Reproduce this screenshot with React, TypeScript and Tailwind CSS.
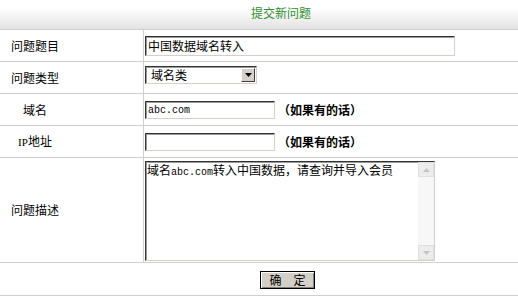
import React from "react";

const cjk = { fontFamily: '"Noto Sans CJK SC", "Noto Sans", sans-serif' };

function Mono({ children }: { children: React.ReactNode }) {
  return (
    <span className="text-[10px] [font-family:'Liberation_Mono',monospace]">{children}</span>
  );
}

function Label({ children }: { children: React.ReactNode }) {
  return (
    <div className="w-[144px] shrink-0 border-r border-[#cfcfcf] flex items-center">
      <div className="w-[70px] text-center text-[12px] leading-[14px] text-black">{children}</div>
    </div>
  );
}

const insetBox =
  "border border-t-[#333] border-l-[#333] border-b-[#d4d0c8] border-r-[#d4d0c8] bg-white shadow-[inset_1px_1px_0_#9a9a9a]";

export default function App() {
  return (
    <div className="w-[518px] h-[300px] bg-white overflow-hidden" style={cjk}>
      {/* header */}
      <div className="h-[30px] border-b border-[#cfcfcf] bg-gradient-to-b from-white from-30% to-[#e2e2e2] flex items-center pl-[251px]">
        <span className="text-[12px] leading-[14px] text-[#2f8f2f] -mt-[4px]">提交新问题</span>
      </div>

      {/* row 1 */}
      <div className="h-[32px] border-b border-[#cfcfcf] flex">
        <Label>问题题目</Label>
        <div className="pl-[1px] pt-[6px]">
          <div className={`w-[310px] h-[20px] ${insetBox} flex items-center pl-[2px] text-[12px] leading-[14px]`}>
            中国数据域名转入
          </div>
        </div>
      </div>

      {/* row 2 */}
      <div className="h-[32px] border-b border-[#cfcfcf] flex">
        <Label>问题类型</Label>
        <div className="pl-[1px] pt-[4px]">
          <div className={`w-[112px] h-[18px] ${insetBox} flex items-center`}>
            <span className="flex-1 pl-[5px] text-[12px] leading-[14px]">域名类</span>
            <div className="w-[14px] h-[14px] mr-[1px] bg-[#d4d0c8] border border-t-white border-l-white border-b-[#404040] border-r-[#404040] flex items-center justify-center">
              <svg width="7" height="4" viewBox="0 0 7 4">
                <path d="M0 0H7L3.5 4Z" fill="#000" />
              </svg>
            </div>
          </div>
        </div>
      </div>

      {/* row 3 */}
      <div className="h-[32px] border-b border-[#cfcfcf] flex">
        <Label>域名</Label>
        <div className="pl-[1px] pt-[7px] flex items-start">
          <div className={`w-[130px] h-[18px] ${insetBox} flex items-center pl-[2px]`}>
            <Mono>abc.com</Mono>
          </div>
          <span className="ml-[3px] mt-[2px] text-[12px] leading-[14px] font-bold">（如果有的话）</span>
        </div>
      </div>

      {/* row 4 */}
      <div className="h-[32px] border-b border-[#cfcfcf] flex">
        <Label>
          <span className="text-[11px] [font-family:'Liberation_Serif',serif]">IP</span>地址
        </Label>
        <div className="pl-[1px] pt-[7px] flex items-start">
          <div className={`w-[130px] h-[18px] ${insetBox}`} />
          <span className="ml-[3px] mt-[2px] text-[12px] leading-[14px] font-bold">（如果有的话）</span>
        </div>
      </div>

      {/* row 5 */}
      <div className="h-[105px] border-b border-[#cfcfcf] flex">
        <Label>问题描述</Label>
        <div className="pl-[1px] pt-[3px]">
          <div className={`w-[290px] h-[100px] ${insetBox} flex`}>
            <div className="flex-1 pl-[1px] pt-[1px] text-[12px] leading-[14px]">
              域名<Mono>abc.com</Mono>转入中国数据，请查询并导入会员
            </div>
            <div className="w-[16px] h-full bg-[#f7f7f7] flex flex-col justify-between">
              <div className="h-[15px] bg-[#ececec] border border-[#e0e0e0] flex items-center justify-center">
                <svg width="7" height="4" viewBox="0 0 7 4">
                  <path d="M0 4H7L3.5 0Z" fill="#c4c4c4" />
                </svg>
              </div>
              <div className="h-[15px] bg-[#ececec] border border-[#e0e0e0] flex items-center justify-center">
                <svg width="7" height="4" viewBox="0 0 7 4">
                  <path d="M0 0H7L3.5 4Z" fill="#c4c4c4" />
                </svg>
              </div>
            </div>
          </div>
        </div>
      </div>

      {/* row 6 */}
      <div className="h-[33px] border-b border-[#cfcfcf] flex pl-[260px] pt-[8px]">
        <div className="w-[55px] h-[18px] bg-[#d4d0c8] border border-black shadow-[inset_1px_1px_0_#ffffff,inset_-1px_-1px_0_#808080] flex items-center justify-center text-[12px] leading-[14px] whitespace-pre">
          确　定
        </div>
      </div>
    </div>
  );
}
